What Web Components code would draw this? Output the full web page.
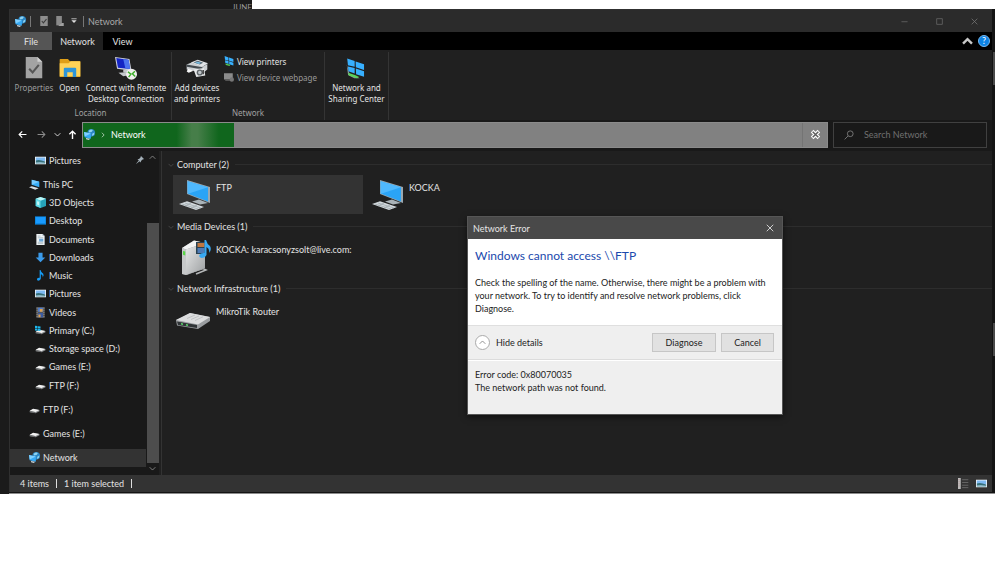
<!DOCTYPE html>
<html lang="en">
<head>
<meta charset="utf-8">
<title>Network</title>
<style>
html,body{margin:0;background:#fff}
body{font:9px/13px "Lato","Noto Sans",sans-serif;color:#e4e4e4;--bg:#202020;--deep:#191919;--line:#2f2f2f}
</style>
</head>
<body>
<desktop-area>
  <span slot="behind">JUNE</span>
  <explorer-window>
    <title-bar slot="title">Network</title-bar>
    <ribbon-tabs slot="tabs"></ribbon-tabs>
    <ribbon-bar slot="ribbon">
      <ribbon-group label="Location">
        <ribbon-button icon="properties" style="--w:48px" muted>Properties</ribbon-button>
        <ribbon-button icon="open" style="--w:23px">Open</ribbon-button>
        <ribbon-button icon="remote" style="--w:90px">Connect with Remote<br>Desktop Connection</ribbon-button>
      </ribbon-group>
      <ribbon-group label="Network">
        <ribbon-button icon="printer" style="--w:50px">Add devices<br>and printers</ribbon-button>
        <small-commands></small-commands>
      </ribbon-group>
      <ribbon-group label="">
        <ribbon-button icon="center" style="--w:63px">Network and<br>Sharing Center</ribbon-button>
      </ribbon-group>
    </ribbon-bar>
    <address-bar slot="address">Network</address-bar>
    <nav-pane slot="nav">
      <nav-item icon="picture" pinned>Pictures</nav-item>
      <nav-gap></nav-gap>
      <nav-item icon="pc" root>This PC</nav-item>
      <nav-item icon="cube">3D Objects</nav-item>
      <nav-item icon="desktop">Desktop</nav-item>
      <nav-item icon="document">Documents</nav-item>
      <nav-item icon="download">Downloads</nav-item>
      <nav-item icon="music">Music</nav-item>
      <nav-item icon="picture">Pictures</nav-item>
      <nav-item icon="video">Videos</nav-item>
      <nav-item icon="sysdrive">Primary (C:)</nav-item>
      <nav-item icon="drive">Storage space (D:)</nav-item>
      <nav-item icon="drive">Games (E:)</nav-item>
      <nav-item icon="drive">FTP (F:)</nav-item>
      <nav-gap></nav-gap>
      <nav-item icon="drive" root>FTP (F:)</nav-item>
      <nav-gap></nav-gap>
      <nav-item icon="drive" root>Games (E:)</nav-item>
      <nav-gap></nav-gap>
      <nav-item icon="network" root selected>Network</nav-item>
    </nav-pane>
    <device-group label="Computer (2)">
      <device-item icon="bigpc" selected>FTP</device-item>
      <device-item icon="bigpc">KOCKA</device-item>
    </device-group>
    <device-group label="Media Devices (1)">
      <device-item icon="media">KOCKA: karacsonyzsolt@live.com:</device-item>
    </device-group>
    <device-group label="Network Infrastructure (1)">
      <device-item icon="router">MikroTik Router</device-item>
    </device-group>
    <status-bar slot="status"></status-bar>
    <error-dialog slot="dialog" heading="Network Error">
      <span slot="title">Windows cannot access \\FTP</span>
      <span slot="text">Check the spelling of the name. Otherwise, there might be a problem with your network. To try to identify and resolve network problems, click Diagnose.</span>
      <span slot="details">Error code: 0x80070035<br>The network path was not found.</span>
    </error-dialog>
  </explorer-window>
</desktop-area>

<script>
const driveShape = '<path d="M1 10 6 7.3 15 8.6 15.3 10.5 9.5 13.4 1 12Z" fill="#8b8e91"/><path d="M1 9.8 6 7 15 8.6 9.5 11.6Z" fill="#f1f1f1"/><path d="M2 11 9 12.5" stroke="#555"/>';
const flag = '<path d="M1 0 7.2 2.2V7L1.6 5.8ZM8 2.5 15 4.8V9.6L8.2 7.4ZM1.6 6.8 7.2 8V12.6L2 10.6ZM8.2 8.4 15 10.6V15.2L8.4 13.2Z" fill="#37b0ff"/>';
const pcShape = '<path d="M8 2 31 9V25L8 16Z" fill="#9ba8b0"/><path d="M8.6 3.2 29 9.3V23.5L8.6 15.6Z" fill="#2aa4f6"/><path d="M8.6 3.2 29 9.3 9 15.7Z" fill="#4fb8fd"/><path d="M13 23.5 20 21.5 29 25 21 26.5Z" fill="#aab3b8"/><path d="M0 26 8 23.2 25 29 17 32Z" fill="#d4dade"/><path d="M3 26 19 31M6 25 22 30M6 28 12 25M12 30 18 27" stroke="#9aa3a8" stroke-width=".7"/>';
const ICONS = {
  network:'<circle cx="10.5" cy="5.6" r="5.6" fill="#2b86c4"/><path d="M7 2.4Q10-.2 13 1.6L11 4.5 7 5ZM12 7 15 5 14.6 8.4 11.6 10Z" fill="#8ed2ef"/><path d="M0 4.5 10 6.5V14L1 12Z" fill="#35a9f5"/><path d="M0 4.5 10 6.5 1 11Z" fill="#7fd0ff"/><path d="M3 13 9 14.3 7 16 3 15Z" fill="#c9d6dd"/>',
  pc:'<path d="M4 1 15 4V12L4 8.5Z" fill="#39adf7"/><path d="M4 1 15 4 4 8.5Z" fill="#76cbff"/><path d="M0 12 4 10.4 14 13.4 9 15.5Z" fill="#d8dee2"/>',
  qprop:'<path d="M2 0H14V16H2Z" fill="#8d8d8d"/><path d="M4.5 8 7 11 12 5" fill="none" stroke="#3d3d3d" stroke-width="1.8"/>',
  qnew:'<path d="M2 0H11V15H2Z" fill="#8a8a8a"/><path d="M11 11H14V16H5Z" fill="#a0a0a0"/>',
  properties:'<path d="M4 0H21L28 7V31H4Z" fill="#a3a3a3"/><path d="M21 0 28 7H21Z" fill="#d0d0d0"/><path d="M9 17 14 22.5 23 11.5" fill="none" stroke="#565656" stroke-width="3"/>',
  open:'<path d="M1 4Q1 3 2 3H13L16 6H31V29H1Z" fill="#e09f17"/><path d="M1 9H14L17 6H30Q31 6 31 7V28H1Z" fill="#ffd257"/><path d="M7 29V17Q7 15.5 8.5 15.5H23.5Q25 15.5 25 17V29H20V22H12V29Z" fill="#2e95d8"/>',
  remote:'<path d="M0 0 21 3 24 20 3 17Z" fill="#cfd2df"/><path d="M1.8 1.6 19.6 4 22 17.6 4.3 15.5Z" fill="#1424c4"/><path d="M12 3 20 4.2 22 17.4 15 16.5Z" fill="#4d73ef"/><path d="M12 18 19 19 20 23 12 22ZM5 23 15 22 22 26 12 28Z" fill="#c5c8cc"/><circle cx="24" cy="25" r="8" fill="#f0f0ee"/><path d="M18.8 21.5 23 25 19.8 29.3M29 20.8 25.3 24.4 29.4 28.4" fill="none" stroke="#3fae2c" stroke-width="2.2"/>',
  printer:'<path d="M7 8 17 4 32 9 23 15Z" fill="#e1e4e7"/><path d="M11 8 17 5.5 25 8.5 20 11Z" fill="#57656e"/><path d="M13 8.2 17 6.8 22 8.5 19 10Z" fill="#77bce3"/><path d="M1 11 8 8 24 14 31 10V18L25 23 1 18Z" fill="#ccd0d3"/><path d="M1 11 24 15V18L1 14Z" fill="#444b50"/><path d="M3 17 11 20 4 23 1 21Z" fill="#f6f6f6"/><path d="M11 18 26 16 28 27 15 29Z" fill="#e6e8e9"/><circle cx="20" cy="22.5" r="4.5" fill="#5e6468"/><circle cx="20" cy="22.5" r="2.5" fill="#c0c6ca"/><path d="M25 19V25" stroke="#333" stroke-width="2"/>',
  center:'<path d="M1 11 5 24 20 31 12 31 3 26Z" fill="#8b9499"/><g transform="translate(0 2) scale(1.75)">'+flag+'</g><path d="M3 23 13 26 19 29 16 31 4 27Z" fill="#5cd25b"/>',
  viewprn:flag+'<path d="M2 12 10 14 9 16 3 14.5Z" fill="#54cf55"/>',
  webpage:'<path d="M0 2H14V12H0Z" fill="#8b8b8b"/><path d="M2 12H9L10 14H2Z" fill="#666"/><circle cx="12.5" cy="12" r="3.5" fill="#777"/>',
  picture:'<path d="M0 2.5H16V13.5H0Z" fill="#f2f6f8"/><path d="M1.2 3.6H14.8V9H1.2Z" fill="#7db9f2"/><path d="M1.2 8Q6 6 14.8 9.6V12.4H1.2Z" fill="#36707a"/><path d="M1.2 10.8Q8 9.8 14.8 11.2V12.4H1.2Z" fill="#a6cfe0"/>',
  cube:'<path d="M8 0 16 2.6V13L8 16 1 13V2.6Z" fill="#26a3b9"/><path d="M8 0 16 2.6 8 5.5 1 2.6Z" fill="#b9f6f7"/><path d="M1 2.6 8 5.5V16L1 13Z" fill="#61dbe8"/><path d="M3 6 6 7V12L3 11Z" fill="#c3f7f8"/>',
  desktop:'<path d="M0 2H16V14H0Z" fill="#0b84dd"/><path d="M1 3H15V12H1Z" fill="#199bff"/>',
  document:'<path d="M2 0H11L14 3V16H2Z" fill="#eff3f5"/><path d="M11 0V3H14" fill="#a5b6c0"/><path d="M4 3H8M4 5.5H12M4 12H12M4 14H12" stroke="#98aab5"/><path d="M6 7H12V11H6Z" fill="#6ea9d8"/>',
  download:'<path d="M5 1H11V8H15L8 15 1 8H5Z" fill="#3b9ae9"/>',
  music:'<path d="M8 0Q9 4 12 5.5 13.5 8 11 11 12 7 8.5 6V12.5Q8 15.5 5 15.5 2.5 15.5 2.8 13.2 3.5 11 6.8 11.2V0Z" fill="#169bf4"/>',
  video:'<path d="M2 0H14V16H2Z" fill="#555"/><path d="M4.5 1H11.5V7H4.5Z" fill="#4f7fd2"/><path d="M4.5 8.5H11.5V15H4.5Z" fill="#3a5ca6"/><path d="M7 3H11V7H7ZM5 11H8V15H5Z" fill="#e1a34b"/><path d="M3 1V16M13 1V16" stroke="#bbb" stroke-dasharray="1.5 1.5"/>',
  drive:driveShape,
  sysdrive:driveShape+'<path d="M0 1 3.6 1.6V4.6L0 4.3ZM4.3 1.7 8 2.3V5L4.3 4.7ZM0 5 3.6 5.3V8.3L0 7.9ZM4.3 5.4 8 5.7V8.9L4.3 8.4Z" fill="#1bb8ee"/>',
  bigpc:pcShape,
  media:'<defs><linearGradient id="g" x2="1" y2="1"><stop stop-color="#e9eaea"/><stop offset="1" stop-color="#9c9fa1"/></linearGradient></defs><path d="M13 32 24 28.5 27 30 17 34" fill="none" stroke="#b5b7b8" stroke-width="1.6"/><path d="M3 8 15 .5 26 3V28L8 35 3 34Z" fill="#8b8e91"/><path d="M3 8 15 .5 26 3 7 9.5Z" fill="#f3f4f4"/><path d="M7 9.5 26 3V28L7 35Z" fill="url(#g)"/><path d="M3 8 7 9.5V35L3 34Z" fill="#c6c8c9"/><path d="M4 11 6.3 11.6V15.4L4 14.8Z" fill="#59d646"/><path d="M17 2H27V14H17Z" fill="#294252"/><path d="M18.5 3H25.5V7H18.5Z" fill="#c07740"/><path d="M18.5 8H25.5V13H18.5Z" fill="#4e7bb6"/><path d="M27 0Q28 4 31 6 33 10 30 13 31 9 27.5 7V15Q26 18 22.5 18 19.6 17.6 20.4 15 21.5 12.7 25.5 13V0Z" fill="#37a8f2"/>',
  router:'<path d="M-3 18 11 11 31 15V19L19 27 -2 23.5Z" fill="#9a9da0"/><path d="M-3 18 11 11 31 15 19 22.5Z" fill="#dcddde"/><path d="M8 16.5 16 13M12 17.5 20 14M16 18.5 24 14.8" stroke="#bfc1c3"/><path d="M-2 19.5 18 23V26L-1 23Z" fill="#303437"/><path d="M2 21.8 4 22.2M7 22.8 9 23.2" stroke="#5bd86a" stroke-width="1.5"/>',
  min:'<path d="M1 8.5H15" stroke="#6e6e6e" stroke-width="1.6"/>',
  max:'<path d="M1.5 1.5H14.5V14.5H1.5Z" fill="none" stroke="#6e6e6e" stroke-width="1.6"/>',
  close:'<path d="M1.5 1.5 14.5 14.5M14.5 1.5 1.5 14.5" stroke="currentColor" stroke-width="1.7"/>',
  caret:'<path d="M1 2H15" stroke="#ddd" stroke-width="2"/><path d="M1 6H15L8 13Z" fill="#ddd"/>',
  up:'<path d="M1.5 11 8 4.5 14.5 11" fill="none" stroke="currentColor" stroke-width="var(--sw,1.8)"/>',
  down:'<path d="M1.5 5 8 11.5 14.5 5" fill="none" stroke="currentColor" stroke-width="var(--sw,1.8)"/>',
  right:'<path d="M5 2 11 8 5 14" fill="none" stroke="currentColor" stroke-width="2.5"/>',
  back:'<path d="M15 8H2M7.5 2.5 2 8 7.5 13.5" fill="none" stroke="currentColor" stroke-width="2"/>',
  fwd:'<path d="M1 8H14M8.5 2.5 14 8 8.5 13.5" fill="none" stroke="currentColor" stroke-width="1.8"/>',
  upfolder:'<path d="M8 16V2M2.5 7.5 8 2 13.5 7.5" fill="none" stroke="currentColor" stroke-width="2.5"/>',
  pin:'<path d="M10 0 16 6 14 7 13 7 10 10 9.5 13 3 6.5 6 6 9 3 9 2ZM5.5 9 7 10.5 1 15.5 .5 15Z" fill="#a5b1ba"/>',
  stop:'<path d="M2 2 14 14M14 2 2 14" stroke="#fff" stroke-width="6.5"/><path d="M3 3 13 13M13 3 3 13" stroke="#5c5c5c" stroke-width="2.6"/>',
  search:'<circle cx="10" cy="6" r="4.6" fill="none" stroke="#777" stroke-width="1.5"/><path d="M6.5 9.5 1 15" stroke="#777" stroke-width="1.5"/>',
  list:'<path d="M0 0H4V16H0Z" fill="#bdbdbd"/><path d="M1.5 2V14" stroke="#a66" stroke-dasharray="1 2"/><path d="M6 2.5H15M6 6.5H15M6 10.5H15M6 14H15" stroke="#676767" stroke-width="1.4"/>'
};
function define(name, css, html){
  customElements.define(name, class extends HTMLElement{
    constructor(){super();this.attachShadow({mode:'open'});}
    connectedCallback(){
      const t=document.createElement('template');
      t.innerHTML='<style>:host,*{box-sizing:border-box}button{font:inherit;color:inherit;background:none;border:0;padding:0;margin:0;white-space:nowrap}'+css+'</style>'+(typeof html==='function'?html(this):html);
      this.shadowRoot.replaceChildren(t.content.cloneNode(true));
    }
  });
}
define('ui-icon',':host{display:block;flex:none;width:var(--s,11px);height:var(--s,11px)}svg{display:block;width:100%;height:100%;overflow:visible}',
  el=>{const b=+(el.getAttribute('box')||16);return `<svg viewBox="0 0 ${b} ${b}" aria-hidden="true">${ICONS[el.getAttribute('name')]}</svg>`});

define('desktop-area',`:host{display:grid;grid-template:9px 1fr/9px 1fr 5px;height:calc(100vh - 69px);min-height:480px}
.edge{background:#1b1b1b;grid-row:1/3}.top{width:243px;background:#1b1b1b;overflow:hidden;text-align:right;color:#999;font-size:8px;line-height:14px}
.win{grid-column:2;grid-row:2;min-height:0}.top{grid-column:2;grid-row:1}`,
  '<div class="edge"></div><div class="top"><slot name="behind"></slot></div><div class="win"><slot></slot></div>');

define('explorer-window',`:host{display:flex;height:100%;position:relative;background:#141414;border-bottom:1px solid #8c8c8c;padding:0 3px 1px 0}
.frame{flex:1;display:flex;flex-direction:column;min-width:0;border:1px solid #303030;border-width:1px 0 0 1px}
.body{flex:1;display:flex;min-height:0;background:var(--bg)}main{flex:1;padding:3px 0 0 6px;border-left:1px solid #333;margin-left:2px;min-width:0}
i{position:absolute;right:0;width:2px;background:#4a4a4a;height:33px}.a{top:43px}.b{top:314px}`,
  '<div class="frame"><slot name="title"></slot><slot name="tabs"></slot><slot name="ribbon"></slot><slot name="address"></slot><div class="body"><slot name="nav"></slot><main><slot></slot></main></div><slot name="status"></slot></div><i class="a"></i><i class="b"></i><slot name="dialog"></slot>');

define('title-bar',`:host{display:flex;align-items:center;height:22px;background:#2b2b2b;color:#a8a8a8;padding-left:5px}
b{width:1px;height:11px;background:#777}.q{--s:10px;display:flex;align-items:center;gap:6px;margin:0 6px 0 8px}.q .c{--s:6px}
span{flex:1;margin-left:4px}.n{--s:11px;margin-right:4px}.w{display:flex;color:#777;--s:7px}.w button{width:35px;height:22px;display:grid;place-items:center}`,
  '<ui-icon class="n" name="network"></ui-icon><b></b><div class="q"><ui-icon name="qprop"></ui-icon><ui-icon name="qnew"></ui-icon><ui-icon class="c" name="caret"></ui-icon></div><b></b><span><slot></slot></span><div class="w"><button aria-label="Minimize"><ui-icon name="min"></ui-icon></button><button aria-label="Maximize"><ui-icon name="max"></ui-icon></button><button aria-label="Close"><ui-icon name="close"></ui-icon></button></div>');

define('ribbon-tabs',`:host{display:flex;align-items:center;height:18px;background:#000;padding-right:2px}
button{height:18px;width:42px}.f{background:#555}.on{width:51px;background:var(--bg)}.v{width:39px}.sp{flex:1}
.u{width:12px;--s:11px;--sw:3.5;color:#c8c8c8}.h{width:12px;height:12px;border-radius:50%;background:#0c82e4;border:1px solid #76b7ee;color:#fff;line-height:10px;margin-left:5px;text-align:center}.u{display:grid;place-items:center}`,
  '<button class="f">File</button><button class="on">Network</button><button class="v">View</button><div class="sp"></div><button class="u" aria-label="Collapse ribbon"><ui-icon name="up"></ui-icon></button><button class="h" aria-label="Help">?</button>');

define('ribbon-bar',':host{display:flex;height:70px;background:var(--bg);flex:none;padding-top:2px;font-family:"Noto Sans",sans-serif;font-size:8px}','<slot></slot>');
define('ribbon-group',':host{display:flex;flex-direction:column;border-right:1px solid #343434}.r{display:flex;flex:1}.l{height:14px;text-align:center;color:#a0a0a0;line-height:13px}',
  el=>`<div class="r"><slot></slot></div><div class="l">${el.getAttribute('label')}</div>`);
define('ribbon-button',':host{display:block;width:var(--w)}:host([muted]){color:#9c9c9c}button{width:100%;display:flex;flex-direction:column;align-items:center;line-height:11px}ui-icon{--s:22px;margin:5px 0 3px}span{display:block;align-self:center}',
  el=>`<button><ui-icon name="${el.getAttribute('icon')}" box="32"></ui-icon><span><slot></slot></span></button>`);
define('small-commands',':host{display:block;width:102px;padding-top:1px}button{display:flex;align-items:center;gap:3px;height:16px;padding-left:2px;--s:10px}.d{color:#999}',
  '<button><ui-icon name="viewprn"></ui-icon>View printers</button><button class="d"><ui-icon name="webpage"></ui-icon>View device webpage</button>');

define('address-bar',`:host{display:flex;align-items:center;height:31px;flex:none;background:var(--deep);padding:0 5px 2px 8px;--s:9px}
.n{display:flex;align-items:center;gap:10px;color:#fff;margin-right:5px}.n button:nth-child(2){color:#8c8c8c}.n button:nth-child(3){--s:7px;margin:0 -3px 0 -2px}
.a{flex:1;height:26px;border:1px solid #8b8b8b;background:#818181;display:flex;min-width:0}
.g{width:151px;display:flex;align-items:center;color:#fff;padding-left:1px;background:linear-gradient(90deg,transparent 62%,#467e49 72%,#467e49 76%,transparent 90%),#10661d}.g ui-icon:first-child{--s:11px}.g .c{--s:6px;margin:0 5px 0 5px;color:#a9c9ac}.sp{flex:1}
.x{width:25px;border-left:1px solid #747474;display:grid;place-items:center}
label{width:154px;height:26px;border:1px solid #404040;margin-left:5px;display:flex;align-items:center;padding-left:10px;--s:10px}input{font:inherit;color:#aaa;background:none;border:0;padding:0;margin-left:10px;width:110px;outline:0}input::placeholder{color:#707070;opacity:1}`,
  '<div class="n"><button aria-label="Back"><ui-icon name="back"></ui-icon></button><button aria-label="Forward"><ui-icon name="fwd"></ui-icon></button><button aria-label="Recent"><ui-icon name="down"></ui-icon></button><button aria-label="Up"><ui-icon name="upfolder"></ui-icon></button></div><div class="a"><div class="g"><ui-icon name="network"></ui-icon><ui-icon class="c" name="right"></ui-icon><slot></slot></div><div class="sp"></div><button class="x" aria-label="Stop"><ui-icon name="stop"></ui-icon></button></div><label><ui-icon name="search"></ui-icon><input aria-label="Search Network" placeholder="Search Network"></label>');

define('nav-pane',`:host{display:flex;background:var(--deep);width:149px;flex:none}nav{flex:1;display:flex;flex-direction:column;padding-bottom:8px}
.s{width:13px;display:flex;flex-direction:column;align-items:center;color:#999;--s:7px;padding:3px 0}.t{width:12px;flex:1;margin:62px 0 2px;background:#4d4d4d}`,
  '<nav><slot></slot></nav><div class="s"><ui-icon name="up"></ui-icon><div class="t"></div><ui-icon name="down"></ui-icon></div>');
define('nav-gap',':host{display:block;flex:1 1 0}','');
define('nav-item',`:host{display:flex;flex:3 1 0;min-height:0;padding-left:25px}:host([root]){padding-left:19px}:host([selected]){background:#333}
a{flex:1;display:flex;align-items:center;gap:3px;color:inherit;text-decoration:none;white-space:nowrap}.p{--s:8px;margin-left:auto;margin-right:2px}`,
  el=>`<a href="#"><ui-icon name="${el.getAttribute('icon')}"></ui-icon><slot></slot>${el.hasAttribute('pinned')?'<ui-icon class="p" name="pin"></ui-icon>':''}</a>`);

define('device-group',':host{display:block;margin-bottom:2px}h2{font:inherit;margin:0;height:21px;display:flex;align-items:center;gap:3px;--s:6px;color:#e4e4e4}h2 ui-icon{color:#555}h2:after{content:"";flex:1;height:1px;background:#2d2d2d;margin-left:3px}.r{display:flex;gap:3px;padding-left:5px}',
  el=>`<h2><ui-icon name="down"></ui-icon>${el.getAttribute('label')}</h2><div class="r"><slot></slot></div>`);
define('device-item',':host{display:flex;width:190px;height:39px;padding:3px 6px;gap:5px;--s:32px}:host([selected]){background:#333}span{padding-top:3px;white-space:nowrap}',
  el=>`<ui-icon name="${el.getAttribute('icon')}" box="32"></ui-icon><span><slot></slot></span>`);

define('status-bar',':host{display:flex;align-items:center;height:17px;flex:none;background:#333;padding:0 5px 0 10px;gap:7px}b{width:1px;height:9px;background:#ddd}.sp{flex:1}button{--s:11px}',
  '<span>4 items</span><b></b><span>1 item selected</span><b></b><div class="sp"></div><button aria-label="Details view"><ui-icon name="list"></ui-icon></button><button aria-label="Large icons view"><ui-icon name="picture"></ui-icon></button>');

define('error-dialog',`:host{display:block;position:absolute;left:458px;top:207px;width:316px;color:#222;background:#efefef;border:1px solid #565656;box-shadow:0 2px 6px #0008}
header{height:22px;background:#494949;color:#e6e6e6;display:flex;align-items:center;justify-content:space-between;padding:0 8px 0 5px;--s:8px}
.m{background:#fff;padding:9px 7px 10px 7px}h1{font-size:12px;line-height:16px;font-weight:400;color:#1b49ad;margin:0 0 12px}p{margin:0}
.b{height:35px;border-top:1px solid #dfdfdf;border-bottom:1px solid #dcdcdc;display:flex;align-items:center;gap:5px;padding:0 8px 0 7px}.h{display:flex;align-items:center;gap:6px;margin-right:auto}.o{width:15px;height:15px;border-radius:50%;border:1px solid #aaa;background:#fff;display:grid;place-items:center;--s:7px;color:#777}
.k{width:64px;height:19px;background:#e1e1e1;border:1px solid #c6c6c6}.c{width:53px}.d{border-top:1px solid #fff;padding:7px 7px 20px}`,
  el=>`<header>${el.getAttribute('heading')}<button aria-label="Close"><ui-icon name="close"></ui-icon></button></header><div class="m"><h1><slot name="title"></slot></h1><p><slot name="text"></slot></p></div><div class="b"><button class="h"><span class="o"><ui-icon name="up"></ui-icon></span>Hide details</button><button class="k">Diagnose</button><button class="k c">Cancel</button></div><div class="d"><slot name="details"></slot></div>`);
</script>
</body>
</html>
